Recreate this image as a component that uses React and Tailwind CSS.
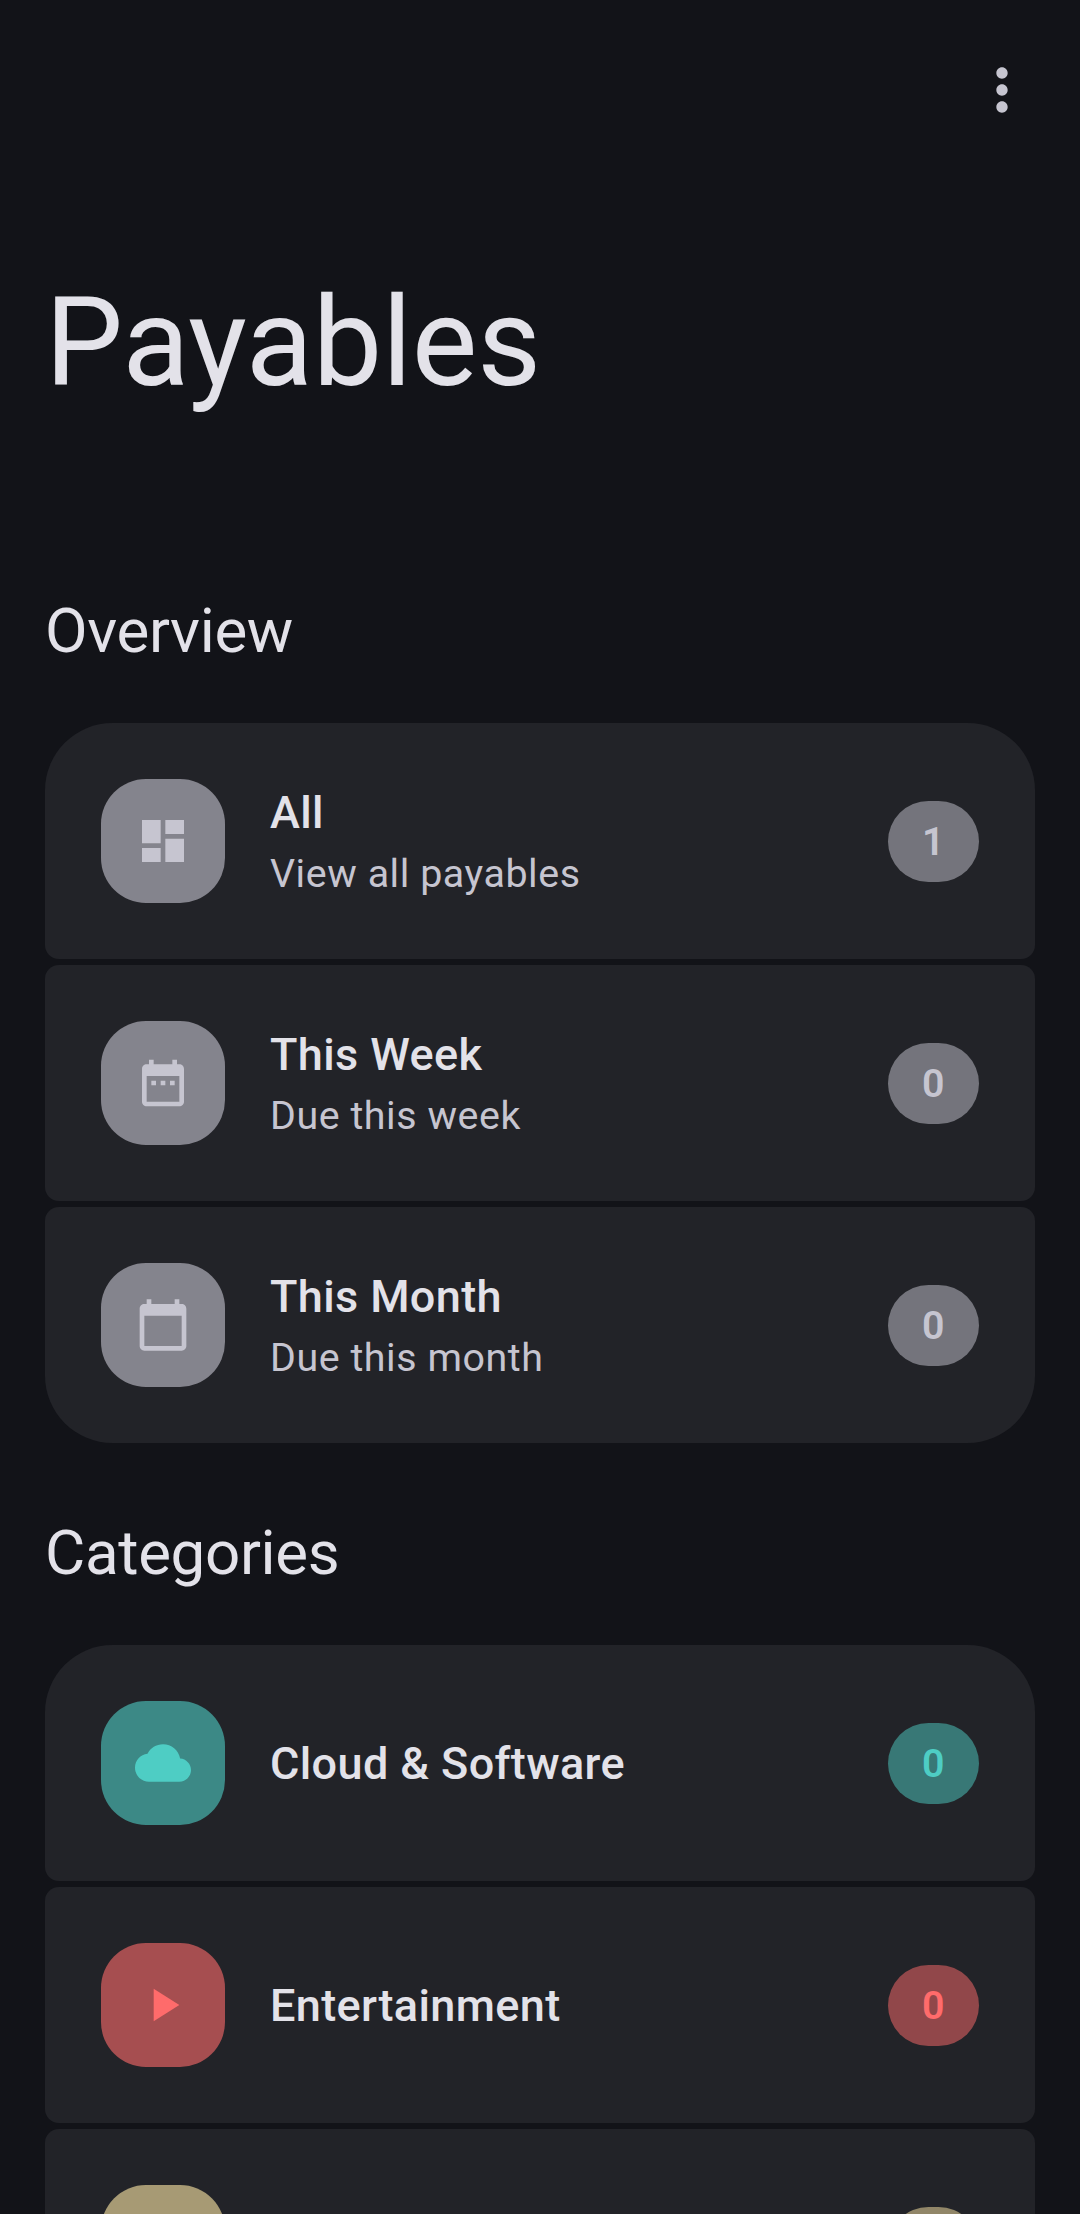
const ICONS = {
  dashboard: "M3 13h8V3H3v10zm0 8h8v-6H3v6zm10 0h8V11h-8v10zm0-18v6h8V3h-8z",
  week: "M9 11H7v2h2v-2zm4 0h-2v2h2v-2zm4 0h-2v2h2v-2zm2-7h-1V2h-2v2H8V2H6v2H5c-1.11 0-1.99.9-1.99 2L3 20c0 1.1.89 2 2 2h14c1.1 0 2-.9 2-2V6c0-1.1-.9-2-2-2zm0 16H5V9h14v11z",
  month: "M20 3h-1V1h-2v2H7V1H5v2H4c-1.1 0-2 .9-2 2v16c0 1.1.9 2 2 2h16c1.1 0 2-.9 2-2V5c0-1.1-.9-2-2-2zm0 18H4V8h16v13z",
  cloud: "M19.35 10.04C18.67 6.59 15.64 4 12 4 9.11 4 6.6 5.64 5.35 8.04 2.34 8.36 0 10.91 0 14c0 3.31 2.69 6 6 6h13c2.76 0 5-2.24 5-5 0-2.64-2.05-4.78-4.65-4.96z",
  play: "M8 5v14l11-7z",
  more: "M12 8c1.1 0 2-.9 2-2s-.9-2-2-2-2 .9-2 2 .9 2 2 2zm0 2c-1.1 0-2 .9-2 2s.9 2 2 2 2-.9 2-2-.9-2-2-2zm0 6c-1.1 0-2 .9-2 2s.9 2 2 2 2-.9 2-2-.9-2-2-2z",
};

const TONES = {
  neutral: { text: "text-[#c6c5d0]", box: "bg-[#c6c5d0]/60", badge: "bg-[#c6c5d0]/50" },
  teal: { text: "text-[#4ecdc4]", box: "bg-[#4ecdc4]/60", badge: "bg-[#4ecdc4]/50" },
  red: { text: "text-[#ff6b6b]", box: "bg-[#ff6b6b]/60", badge: "bg-[#ff6b6b]/50" },
  sand: { text: "text-[#ffeaa7]", box: "bg-[#ffeaa7]/60", badge: "bg-[#ffeaa7]/50" },
};

const SHAPES = {
  first: "rounded-t-[67.5px] rounded-b-[14px]",
  middle: "rounded-[14px]",
  last: "rounded-t-[14px] rounded-b-[67.5px]",
};

function Icon({ name, className }) {
  return (
    <svg viewBox="0 0 24 24" fill="currentColor" className={className}>
      <path d={ICONS[name]} />
    </svg>
  );
}

function Row({ icon, title, subtitle, count, tone, shape }) {
  const t = TONES[tone];
  return (
    <li className={`flex h-[236px] shrink-0 items-center bg-[#222328] px-14 ${SHAPES[shape]}`}>
      <div className={`flex size-[124px] items-center justify-center rounded-[45px] ${t.box} ${t.text}`}>
        {icon && <Icon name={icon} className="size-14" />}
      </div>
      <div className="ml-[45px] flex-1">
        <h3 className="text-[45px] leading-[67px] font-medium tracking-[0.38px] text-[#e3e2e9]">{title}</h3>
        {subtitle && (
          <p className="pb-0.5 text-[39.375px] leading-[55px] tracking-[0.56px] text-[#c6c5d0]">{subtitle}</p>
        )}
      </div>
      <span
        className={`flex h-[81px] w-[91px] items-center justify-center rounded-full text-[39.375px] leading-[47px] font-semibold tracking-[0.28px] ${t.badge} ${t.text}`}
      >
        {count}
      </span>
    </li>
  );
}

function Section({ title, children }) {
  return (
    <section>
      <h2 className="flex h-[180px] items-center pb-1 text-[61.875px] leading-[72px] tracking-[-0.34px] text-[#e3e2e9]">
        {title}
      </h2>
      <ul className="flex flex-col gap-1.5">{children}</ul>
    </section>
  );
}

export default function App() {
  return (
    <main className="flex h-[2214px] flex-col overflow-hidden bg-[#121318] px-[45px] font-['Roboto',sans-serif]">
      <header className="flex h-[180px] shrink-0 items-center justify-end">
        <button aria-label="More options" className="-mr-px text-[#c6c5d0]">
          <Icon name="more" className="size-[68px]" />
        </button>
      </header>
      <h1 className="mt-[90px] mb-32 text-[123.75px] leading-[145px] tracking-[-0.25px] text-[#e3e2e9]">Payables</h1>
      <div className="flex flex-col gap-[22px]">
        <Section title="Overview">
          <Row icon="dashboard" title="All" subtitle="View all payables" count={1} tone="neutral" shape="first" />
          <Row icon="week" title="This Week" subtitle="Due this week" count={0} tone="neutral" shape="middle" />
          <Row icon="month" title="This Month" subtitle="Due this month" count={0} tone="neutral" shape="last" />
        </Section>
        <Section title="Categories">
          <Row icon="cloud" title="Cloud &amp; Software" count={0} tone="teal" shape="first" />
          <Row icon="play" title="Entertainment" count={0} tone="red" shape="middle" />
          <Row tone="sand" shape="middle" />
        </Section>
      </div>
    </main>
  );
}
